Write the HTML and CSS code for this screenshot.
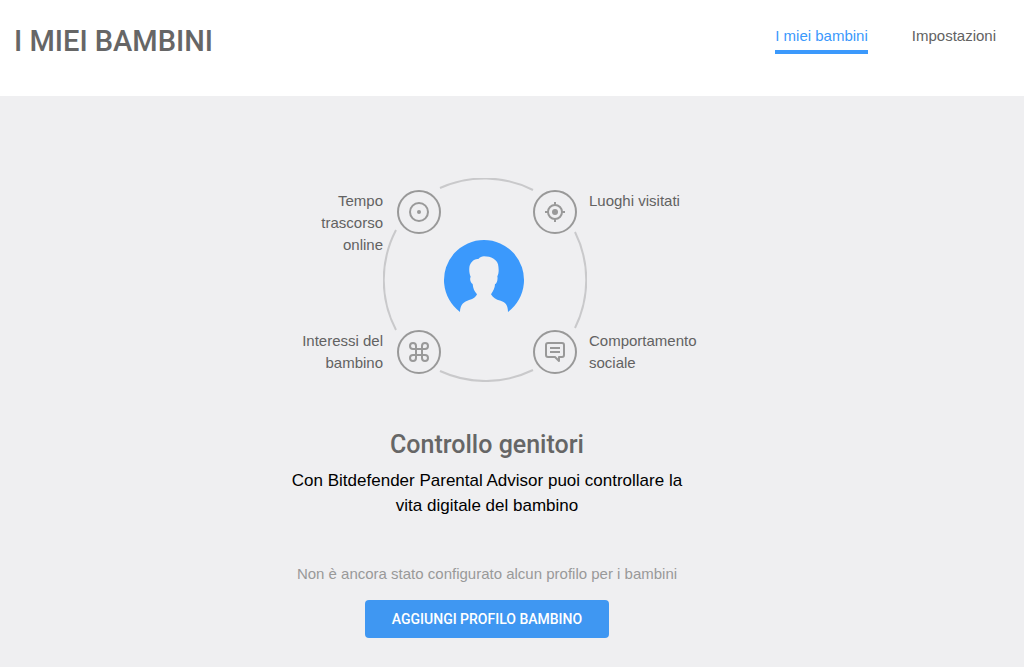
FILE: index.html
```
<!DOCTYPE html>
<html lang="it">
<head>
  <meta charset="UTF-8">
  <meta name="viewport" content="width=device-width, initial-scale=1">
  <title>I miei bambini</title>
  <link rel="stylesheet" href="styles.css">
</head>
<body>

  <header class="header">
    <h1>I MIEI BAMBINI</h1>
    <nav class="nav">
      <a href="#bambini" class="active">I miei bambini</a>
      <a href="#impostazioni">Impostazioni</a>
    </nav>
  </header>

  <main class="content">
    <div class="features">
      <div class="labels labels-left">
        <p>Tempo trascorso online</p>
        <p>Interessi del bambino</p>
      </div>

      <svg class="ring" viewBox="0 0 204 204" fill="none" aria-hidden="true">
        <!-- Outer ring -->
        <g stroke="#c9c9cb" stroke-width="2">
          <path d="M57 10A108 108 0 0 1 150 12"/>
          <path d="M192 54A108 108 0 0 1 192 150"/>
          <path d="M150 192A108 108 0 0 1 57 193"/>
          <path d="M13 152A108 108 0 0 1 13 52"/>
        </g>

        <!-- Avatar -->
        <svg x="51" y="53" width="100" height="100" viewBox="0 0 300 300">
          <path fill="#3b99fc" d="M78 243A120 120 0 1 1 222 243C222 223 215 214 200 209C185 206 177 200 171 190C178 180 183 170 183 160C189 158 192 145 190 136C196 125 194 110 192 100C188 86 172 76 150 76C143 77 138 79 133 84C120 82 107 96 106 110C105 122 107 130 110 137C106 145 110 157 116 159C117 172 121 181 129 190C124 201 115 205 100 209C85 215 79 224 78 243Z"/>
        </svg>

        <g stroke="#999999" stroke-width="2">
          <!-- Time -->
          <g transform="translate(36 34)">
            <circle r="21"/>
            <circle r="9"/>
            <circle r="2" fill="#999999" stroke="none"/>
          </g>
          <!-- Places -->
          <g transform="translate(172 34)">
            <circle r="21"/>
            <circle r="7"/>
            <circle r="3" fill="#999999" stroke="none"/>
            <path d="M0 -10V-7M0 7V10M-10 0H-7M7 0H10"/>
          </g>
          <!-- Interests -->
          <g transform="translate(36 174)">
            <circle r="21"/>
            <path d="M6 -9a3 3 0 0 0 -3 3v12a3 3 0 1 0 3 -3H-6a3 3 0 1 0 3 3V-6a3 3 0 1 0 -3 3H6a3 3 0 0 0 0 -6z"/>
          </g>
          <!-- Social -->
          <g transform="translate(172 174)" stroke-linejoin="round">
            <circle r="21"/>
            <path d="M-7 -9H7a2 2 0 0 1 2 2V3a2 2 0 0 1 -2 2H4V9L0 5H-7a2 2 0 0 1 -2 -2V-7a2 2 0 0 1 2 -2z"/>
            <path d="M-5 -4H5M-5 0H5"/>
          </g>
        </g>
      </svg>

      <div class="labels labels-right">
        <p>Luoghi visitati</p>
        <p>Comportamento sociale</p>
      </div>
    </div>

    <h2>Controllo genitori</h2>
    <p class="intro">Con Bitdefender Parental Advisor puoi controllare la vita digitale del bambino</p>
    <p class="empty">Non è ancora stato configurato alcun profilo per i bambini</p>
    <button type="button" class="add-button">AGGIUNGI PROFILO BAMBINO</button>
  </main>

</body>
</html>
```
FILE: styles.css
```
* {
  box-sizing: border-box;
}

body {
  margin: 0;
  min-height: 100vh;
  background: #efeff1;
  color: #626262;
  font-family: "Liberation Sans", Arial, sans-serif;
  font-size: 15px;
  line-height: 22px;
}

h1,
h2,
p {
  margin: 0;
}

h1,
h2 {
  font-family: Roboto, sans-serif;
  font-weight: 500;
  color: #666666;
}

.header {
  display: flex;
  justify-content: space-between;
  align-items: flex-start;
  padding: 25px 28px 39px 14px;
  background: #ffffff;
}

h1 {
  font-size: 29px;
  line-height: 32px;
}

.nav {
  display: flex;
  gap: 44px;
}

.nav a {
  padding-bottom: 3px;
  color: #626262;
  text-decoration: none;
}

.nav a.active {
  color: #3b99fc;
  border-bottom: 4px solid #3b99fc;
}

.content {
  display: flex;
  flex-direction: column;
  align-items: center;
  padding: 82px 50px 28px 0;
  text-align: center;
}

.features {
  display: grid;
  grid-template-columns: 106px 204px 110px;
}

.ring {
  display: block;
  width: 204px;
  height: 204px;
}

.labels {
  display: grid;
  grid-template-rows: 140px auto;
  padding-top: 12px;
}

.labels-left {
  padding-left: 20px;
  text-align: right;
}

.labels-right {
  padding-left: 2px;
  text-align: left;
}

h2 {
  margin-top: 47px;
  font-size: 25px;
  line-height: 32px;
}

.intro {
  max-width: 400px;
  margin-top: 7px;
  color: #000000;
  font-size: 17px;
  line-height: 25px;
}

.empty {
  margin-top: 45px;
  color: #999999;
}

.add-button {
  height: 38px;
  margin-top: 15px;
  padding: 0 27px;
  border: none;
  border-radius: 4px;
  background: #3f97f2;
  color: #ffffff;
  font-family: Roboto, sans-serif;
  font-size: 14px;
  font-weight: 500;
  cursor: pointer;
}

.add-button:hover {
  background: #2f86e0;
}
```
